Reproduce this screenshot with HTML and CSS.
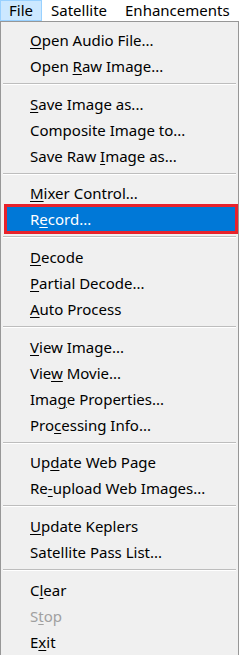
FILE: index.html
```html
<!DOCTYPE html>
<html>
<head>
<meta charset="utf-8">
<link rel="stylesheet" href="styles.css">
</head>
<body>
<div class="menubar">
  <span class="top active">File</span>
  <span class="top">Satellite</span>
  <span class="top">Enhancements</span>
</div>
<div class="menu">
  <div class="item"><span class="label"><u>O</u>pen Audio File...</span></div>
  <div class="item"><span class="label">Open <u>R</u>aw Image...</span></div>
  <div class="sep"></div>
  <div class="item"><span class="label"><u>S</u>ave Image as...</span></div>
  <div class="item"><span class="label">Composite Image to...</span></div>
  <div class="item"><span class="label">Save Raw <u>I</u>mage as...</span></div>
  <div class="sep"></div>
  <div class="item"><span class="label"><u>M</u>ixer Control...</span></div>
  <div class="item hot"><span class="label">R<u>e</u>cord...</span></div>
  <div class="sep"></div>
  <div class="item"><span class="label"><u>D</u>ecode</span></div>
  <div class="item"><span class="label"><u>P</u>artial Decode...</span></div>
  <div class="item"><span class="label"><u>A</u>uto Process</span></div>
  <div class="sep"></div>
  <div class="item"><span class="label"><u>V</u>iew Image...</span></div>
  <div class="item"><span class="label">Vie<u>w</u> Movie...</span></div>
  <div class="item"><span class="label">Ima<u>g</u>e Properties...</span></div>
  <div class="item"><span class="label">Pro<u>c</u>essing Info...</span></div>
  <div class="sep"></div>
  <div class="item"><span class="label">Up<u>d</u>ate Web Page</span></div>
  <div class="item"><span class="label">Re<u>-</u>upload Web Images...</span></div>
  <div class="sep"></div>
  <div class="item"><span class="label"><u>U</u>pdate Keplers</span></div>
  <div class="item"><span class="label">Satellite Pass List...</span></div>
  <div class="sep"></div>
  <div class="item"><span class="label">C<u>l</u>ear</span></div>
  <div class="item disabled"><span class="label">S<u>t</u>op</span></div>
  <div class="item"><span class="label">E<u>x</u>it</span></div>
</div>
</body>
</html>
```
FILE: styles.css
```css
html, body {
  margin: 0;
  padding: 0;
  background: #ffffff;
}
body {
  width: 240px;
  height: 655px;
  overflow: hidden;
  font-family: "Noto Sans", "Open Sans", sans-serif;
  font-size: 15px;
  color: #000;
}
.menubar {
  display: flex;
  height: 21px;
  background: #ffffff;
}
.top {
  display: block;
  box-sizing: border-box;
  height: 21px;
  line-height: 19px;
  padding: 0 8px;
  border: 1px solid transparent;
  white-space: nowrap;
}
.top.active {
  background: #cce8ff;
  border-color: #99d1ff;
}
.menu {
  box-sizing: border-box;
  width: 239px;
  border: 1px solid #979797;
  border-bottom: none;
  background: #f0f0f0;
  padding: 3px 2px 0 2px;
  height: 634px;
}
.item {
  position: relative;
  box-sizing: border-box;
  height: 26px;
  padding: 4px 0 0 27px;
  line-height: 22px;
  white-space: nowrap;
}
.item u {
  text-decoration: underline;
  text-decoration-thickness: 1px;
  text-underline-offset: 2px;
}
.label {
  position: relative;
  z-index: 1;
}
.item.hot {
  color: #ffffff;
}
.item.hot::before {
  content: "";
  position: absolute;
  left: 1px;
  right: -2px;
  top: 0;
  bottom: -4px;
  background: #0078d7;
  border: 3px solid #e8222b;
  z-index: 0;
}
.item.disabled {
  color: #a0a0a0;
}
.sep {
  box-sizing: border-box;
  height: 11.7px;
  padding-top: 6px;
}
.sep::before {
  content: "";
  display: block;
  height: 1px;
  background: #bdbdbd;
  border-bottom: 1px solid #ffffff;
}
```
